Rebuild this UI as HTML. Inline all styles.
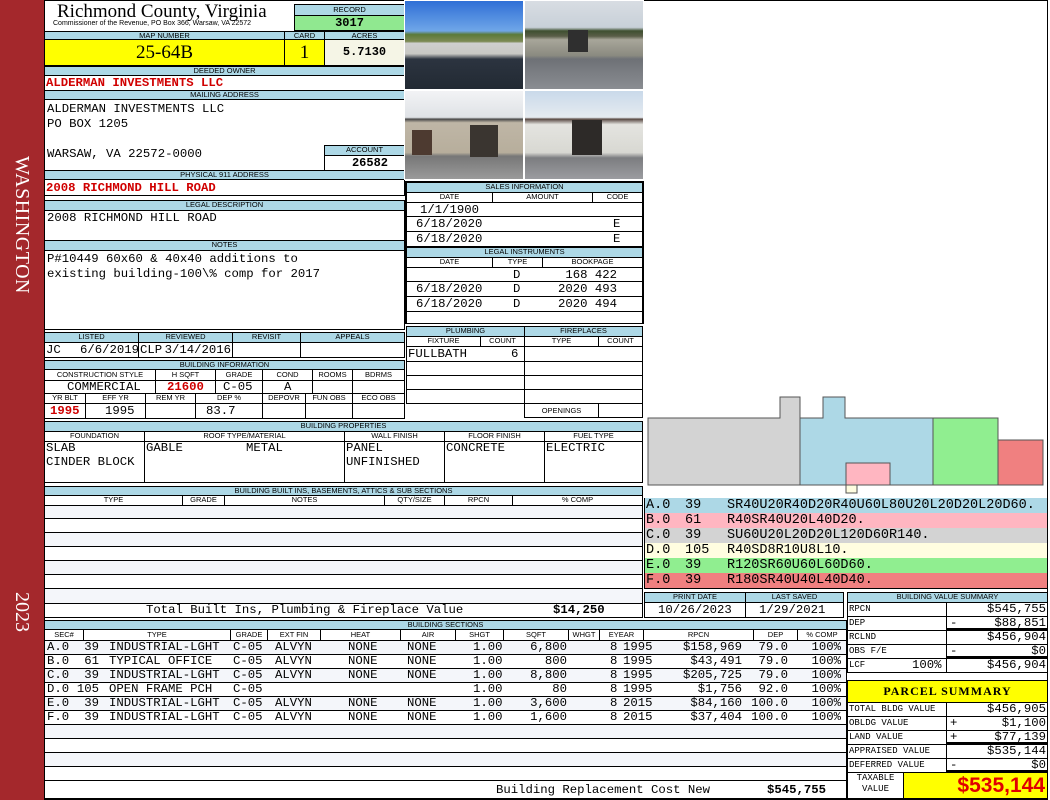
<!DOCTYPE html>
<html><head><meta charset="utf-8"><style>
*{margin:0;padding:0}
body{width:1050px;height:800px;position:relative;background:#fff;overflow:hidden;font-family:"Liberation Sans",sans-serif}
.a{position:absolute;box-sizing:border-box}
.h{position:absolute;box-sizing:border-box;background:#add8e6;border:1px solid #000;font:7.5px "Liberation Sans",sans-serif;text-align:center;line-height:8px;overflow:hidden;white-space:nowrap;color:#000}
.c{position:absolute;box-sizing:border-box;border:1px solid #000;background:#fff}
.t{position:absolute;font:12.3px "Liberation Mono",monospace;white-space:pre;line-height:13px;color:#000}
.R{text-align:right}
.r{color:#d00000;font-weight:bold}
.s{position:absolute;font:9px "Liberation Mono",monospace;white-space:pre;line-height:13px}
.L{position:absolute;font:13.5px "Liberation Mono",monospace;white-space:pre;line-height:15px}
</style></head><body>
<div class="a" style="left:0;top:0;width:44px;height:800px;background:#a4282c"></div>
<div class="a" style="left:8px;top:156px;width:28px;height:170px;color:#fff;font:20px 'Liberation Serif',serif;writing-mode:vertical-rl;line-height:28px;letter-spacing:0.5px">WASHINGTON</div>
<div class="a" style="left:8px;top:592px;width:28px;height:40px;color:#fff;font:20px 'Liberation Serif',serif;writing-mode:vertical-rl;line-height:28px">2023</div>
<div class="a" style="left:44px;top:0;width:1004px;height:800px;border:1px solid #000"></div>

<div class="a" style="left:57px;top:2px;font:19px 'Liberation Serif',serif;line-height:20px">Richmond County, Virginia</div>
<div class="a" style="left:53px;top:20px;font:7px 'Liberation Sans',sans-serif;line-height:8px;white-space:nowrap">Commissioner of the Revenue, PO Box 366, Warsaw, VA 22572</div>
<div class="h" style="left:294px;top:4px;width:111px;height:12px;line-height:10px">RECORD</div>
<div class="c" style="left:294px;top:15px;width:111px;height:16px;background:#90e890;font:bold 12px 'Liberation Mono',monospace;text-align:center;line-height:14px">3017</div>

<div class="h" style="left:44px;top:31px;width:241px;height:9px">MAP NUMBER</div>
<div class="h" style="left:284px;top:31px;width:41px;height:9px">CARD</div>
<div class="h" style="left:324px;top:31px;width:81px;height:9px">ACRES</div>
<div class="c" style="left:44px;top:39px;width:241px;height:27px;background:#ffff00;font:19px 'Liberation Serif',serif;text-align:center;line-height:25px">25-64B</div>
<div class="c" style="left:284px;top:39px;width:41px;height:27px;background:#ffff00;font:19px 'Liberation Serif',serif;text-align:center;line-height:25px">1</div>
<div class="c" style="left:324px;top:39px;width:81px;height:27px;background:#f5f5e6;font:bold 12px 'Liberation Mono',monospace;text-align:center;line-height:25px">5.7130</div>

<div class="h" style="left:44px;top:66px;width:361px;height:10px">DEEDED OWNER</div>
<div class="c" style="left:44px;top:75px;width:361px;height:16px"></div>
<div class="t r" style="left:46px;top:77px">ALDERMAN INVESTMENTS LLC</div>
<div class="h" style="left:44px;top:90px;width:361px;height:10px">MAILING ADDRESS</div>
<div class="c" style="left:44px;top:99px;width:361px;height:72px"></div>
<div class="t" style="left:47px;top:103px">ALDERMAN INVESTMENTS LLC</div>
<div class="t" style="left:47px;top:118px">PO BOX 1205</div>
<div class="t" style="left:47px;top:148px">WARSAW, VA 22572-0000</div>
<div class="h" style="left:324px;top:145px;width:81px;height:11px">ACCOUNT</div>
<div class="c" style="left:324px;top:155px;width:81px;height:16px;font:bold 12px 'Liberation Mono',monospace;text-align:right;padding-right:16px;line-height:14px">26582</div>
<div class="h" style="left:44px;top:170px;width:361px;height:10px">PHYSICAL 911 ADDRESS</div>
<div class="c" style="left:44px;top:179px;width:361px;height:17px"></div>
<div class="t r" style="left:46px;top:182px">2008 RICHMOND HILL ROAD</div>

<div class="h" style="left:44px;top:200px;width:361px;height:11px">LEGAL DESCRIPTION</div>
<div class="c" style="left:44px;top:210px;width:361px;height:31px"></div>
<div class="t" style="left:47px;top:212px">2008 RICHMOND HILL ROAD</div>
<div class="h" style="left:44px;top:240px;width:361px;height:11px">NOTES</div>
<div class="c" style="left:44px;top:250px;width:361px;height:80px"></div>
<div class="t" style="left:47px;top:253px">P#10449 60x60 &amp; 40x40 additions to</div>
<div class="t" style="left:47px;top:268px">existing building-100\% comp for 2017</div>

<div class="h" style="left:44px;top:332px;width:95px;height:11px">LISTED</div>
<div class="h" style="left:138px;top:332px;width:95px;height:11px">REVIEWED</div>
<div class="h" style="left:232px;top:332px;width:69px;height:11px">REVISIT</div>
<div class="h" style="left:300px;top:332px;width:105px;height:11px">APPEALS</div>
<div class="c" style="left:44px;top:342px;width:95px;height:16px"></div>
<div class="c" style="left:138px;top:342px;width:95px;height:16px"></div>
<div class="c" style="left:232px;top:342px;width:69px;height:16px"></div>
<div class="c" style="left:300px;top:342px;width:105px;height:16px"></div>
<div class="t" style="left:46px;top:344px">JC</div>
<div class="t R" style="left:80px;top:344px;width:58px">6/6/2019</div>
<div class="t" style="left:140px;top:344px">CLP</div>
<div class="t R" style="left:160px;top:344px;width:71px">3/14/2016</div>

<div class="h" style="left:44px;top:360px;width:361px;height:10px">BUILDING INFORMATION</div>
<div class="h" style="left:44px;top:369px;width:112px;height:12px;background:#fff;line-height:10px">CONSTRUCTION STYLE</div>
<div class="h" style="left:155px;top:369px;width:61px;height:12px;background:#fff;line-height:10px">H SQFT</div>
<div class="h" style="left:215px;top:369px;width:48px;height:12px;background:#fff;line-height:10px">GRADE</div>
<div class="h" style="left:262px;top:369px;width:51px;height:12px;background:#fff;line-height:10px">COND</div>
<div class="h" style="left:312px;top:369px;width:41px;height:12px;background:#fff;line-height:10px">ROOMS</div>
<div class="h" style="left:352px;top:369px;width:53px;height:12px;background:#fff;line-height:10px">BDRMS</div>
<div class="c" style="left:44px;top:380px;width:112px;height:14px"></div>
<div class="c" style="left:155px;top:380px;width:61px;height:14px"></div>
<div class="c" style="left:215px;top:380px;width:48px;height:14px"></div>
<div class="c" style="left:262px;top:380px;width:51px;height:14px"></div>
<div class="c" style="left:312px;top:380px;width:41px;height:14px"></div>
<div class="c" style="left:352px;top:380px;width:53px;height:14px"></div>
<div class="t" style="left:67px;top:381px">COMMERCIAL</div>
<div class="t r" style="left:167px;top:381px">21600</div>
<div class="t" style="left:223px;top:381px">C-05</div>
<div class="t" style="left:284px;top:381px">A</div>
<div class="h" style="left:44px;top:393px;width:42px;height:11px;background:#fff">YR BLT</div>
<div class="h" style="left:85px;top:393px;width:61px;height:11px;background:#fff">EFF YR</div>
<div class="h" style="left:145px;top:393px;width:51px;height:11px;background:#fff">REM YR</div>
<div class="h" style="left:195px;top:393px;width:68px;height:11px;background:#fff">DEP %</div>
<div class="h" style="left:262px;top:393px;width:44px;height:11px;background:#fff">DEPOVR</div>
<div class="h" style="left:305px;top:393px;width:48px;height:11px;background:#fff">FUN OBS</div>
<div class="h" style="left:352px;top:393px;width:53px;height:11px;background:#fff">ECO OBS</div>
<div class="c" style="left:44px;top:403px;width:42px;height:16px"></div>
<div class="c" style="left:85px;top:403px;width:61px;height:16px"></div>
<div class="c" style="left:145px;top:403px;width:51px;height:16px"></div>
<div class="c" style="left:195px;top:403px;width:68px;height:16px"></div>
<div class="c" style="left:262px;top:403px;width:44px;height:16px"></div>
<div class="c" style="left:305px;top:403px;width:48px;height:16px"></div>
<div class="c" style="left:352px;top:403px;width:53px;height:16px"></div>
<div class="t r" style="left:50px;top:405px">1995</div>
<div class="t" style="left:105px;top:405px">1995</div>
<div class="t" style="left:206px;top:405px">83.7</div>

<div class="a" style="left:404px;top:0;width:120px;height:90px;border:1px solid #fff;background:linear-gradient(#2f6fd6 0,#6fa6e8 34%,#5b7a3a 38%,#7d8a55 46%,#cfcfcf 48%,#c8c8c4 60%,#2c3440 66%,#222a33 100%)"></div>
<div class="a" style="left:524px;top:0;width:120px;height:90px;border:1px solid #fff;background:linear-gradient(#d8dde3 0,#c8d0d8 30%,#3f5030 34%,#5a5e48 40%,#a8a69a 44%,#8a8a80 62%,#6e7176 66%,#8a8d92 100%)"></div>
<div class="a" style="left:404px;top:90px;width:120px;height:90px;border:1px solid #fff;background:linear-gradient(#f2f3f5 0,#dfe2e6 30%,#4a4a4a 32%,#bfb6a6 36%,#b7ae9c 70%,#777 74%,#9a9a9a 100%)"></div>
<div class="a" style="left:524px;top:90px;width:120px;height:90px;border:1px solid #fff;background:linear-gradient(#c9d9ea 0,#e6ebf0 30%,#5a4a44 32%,#e4e4e0 38%,#d8d8d2 70%,#7c7d80 76%,#9b9ca0 100%)"></div>
<div class="a" style="left:412px;top:130px;width:20px;height:25px;background:#4d3a30"></div>
<div class="a" style="left:470px;top:125px;width:28px;height:32px;background:#3a3530"></div>
<div class="a" style="left:572px;top:120px;width:30px;height:35px;background:#2d2a28"></div>
<div class="a" style="left:568px;top:30px;width:20px;height:22px;background:#2f2f2f"></div>

<div class="c" style="left:405px;top:181px;width:239px;height:67px"></div>
<div class="h" style="left:406px;top:182px;width:237px;height:11px">SALES INFORMATION</div>
<div class="h" style="left:406px;top:192px;width:87px;height:11px;background:#fff">DATE</div>
<div class="h" style="left:492px;top:192px;width:101px;height:11px;background:#fff">AMOUNT</div>
<div class="h" style="left:592px;top:192px;width:51px;height:11px;background:#fff">CODE</div>
<div class="c" style="left:406px;top:202px;width:237px;height:15px"></div>
<div class="c" style="left:406px;top:216px;width:237px;height:16px"></div>
<div class="c" style="left:406px;top:231px;width:237px;height:16px"></div>
<div class="t" style="left:420px;top:204px">1/1/1900</div>
<div class="t" style="left:416px;top:218px">6/18/2020</div><div class="t" style="left:613px;top:218px">E</div>
<div class="t" style="left:416px;top:233px">6/18/2020</div><div class="t" style="left:613px;top:233px">E</div>

<div class="c" style="left:405px;top:246px;width:239px;height:78px"></div>
<div class="h" style="left:406px;top:247px;width:237px;height:11px">LEGAL INSTRUMENTS</div>
<div class="h" style="left:406px;top:257px;width:87px;height:11px;background:#fff">DATE</div>
<div class="h" style="left:492px;top:257px;width:51px;height:11px;background:#fff">TYPE</div>
<div class="h" style="left:542px;top:257px;width:101px;height:11px;background:#fff">BOOKPAGE</div>
<div class="c" style="left:406px;top:267px;width:237px;height:15px"></div>
<div class="c" style="left:406px;top:281px;width:237px;height:16px"></div>
<div class="c" style="left:406px;top:296px;width:237px;height:16px"></div>
<div class="c" style="left:406px;top:311px;width:237px;height:13px"></div>
<div class="t" style="left:513px;top:269px">D</div><div class="t R" style="left:540px;top:269px;width:77px">168 422</div>
<div class="t" style="left:416px;top:283px">6/18/2020</div><div class="t" style="left:513px;top:283px">D</div><div class="t R" style="left:540px;top:283px;width:77px">2020 493</div>
<div class="t" style="left:416px;top:298px">6/18/2020</div><div class="t" style="left:513px;top:298px">D</div><div class="t R" style="left:540px;top:298px;width:77px">2020 494</div>

<div class="h" style="left:406px;top:326px;width:119px;height:11px">PLUMBING</div>
<div class="h" style="left:524px;top:326px;width:119px;height:11px">FIREPLACES</div>
<div class="h" style="left:406px;top:336px;width:75px;height:11px;background:#fff">FIXTURE</div>
<div class="h" style="left:480px;top:336px;width:45px;height:11px;background:#fff">COUNT</div>
<div class="h" style="left:524px;top:336px;width:75px;height:11px;background:#fff">TYPE</div>
<div class="h" style="left:598px;top:336px;width:45px;height:11px;background:#fff">COUNT</div>
<div class="c" style="left:406px;top:346px;width:119px;height:16px"></div>
<div class="c" style="left:406px;top:361px;width:119px;height:15px"></div>
<div class="c" style="left:406px;top:375px;width:119px;height:15px"></div>
<div class="c" style="left:406px;top:389px;width:119px;height:15px"></div>
<div class="c" style="left:524px;top:346px;width:119px;height:16px"></div>
<div class="c" style="left:524px;top:361px;width:119px;height:15px"></div>
<div class="c" style="left:524px;top:375px;width:119px;height:15px"></div>
<div class="c" style="left:524px;top:389px;width:119px;height:15px"></div>
<div class="h" style="left:524px;top:403px;width:75px;height:15px;background:#fff;line-height:13px">OPENINGS</div>
<div class="c" style="left:598px;top:403px;width:45px;height:15px"></div>
<div class="t" style="left:408px;top:348px">FULLBATH</div><div class="t" style="left:511px;top:348px">6</div>

<div class="h" style="left:44px;top:421px;width:599px;height:11px">BUILDING PROPERTIES</div>
<div class="h" style="left:44px;top:431px;width:101px;height:11px;background:#fff">FOUNDATION</div>
<div class="h" style="left:144px;top:431px;width:201px;height:11px;background:#fff">ROOF TYPE/MATERIAL</div>
<div class="h" style="left:344px;top:431px;width:101px;height:11px;background:#fff">WALL FINISH</div>
<div class="h" style="left:444px;top:431px;width:101px;height:11px;background:#fff">FLOOR FINISH</div>
<div class="h" style="left:544px;top:431px;width:99px;height:11px;background:#fff">FUEL TYPE</div>
<div class="c" style="left:44px;top:441px;width:101px;height:42px"></div>
<div class="c" style="left:144px;top:441px;width:201px;height:42px"></div>
<div class="c" style="left:344px;top:441px;width:101px;height:42px"></div>
<div class="c" style="left:444px;top:441px;width:101px;height:42px"></div>
<div class="c" style="left:544px;top:441px;width:99px;height:42px"></div>
<div class="t" style="left:46px;top:442px">SLAB</div>
<div class="t" style="left:46px;top:456px">CINDER BLOCK</div>
<div class="t" style="left:146px;top:442px">GABLE</div>
<div class="t" style="left:246px;top:442px">METAL</div>
<div class="t" style="left:346px;top:442px">PANEL</div>
<div class="t" style="left:346px;top:456px">UNFINISHED</div>
<div class="t" style="left:446px;top:442px">CONCRETE</div>
<div class="t" style="left:546px;top:442px">ELECTRIC</div>

<div class="h" style="left:44px;top:486px;width:599px;height:10px">BUILDING BUILT INS, BASEMENTS, ATTICS &amp; SUB SECTIONS</div>
<div class="h" style="left:44px;top:495px;width:139px;height:11px;background:#fff">TYPE</div>
<div class="h" style="left:182px;top:495px;width:43px;height:11px;background:#fff">GRADE</div>
<div class="h" style="left:224px;top:495px;width:161px;height:11px;background:#fff">NOTES</div>
<div class="h" style="left:384px;top:495px;width:61px;height:11px;background:#fff">QTY/SIZE</div>
<div class="h" style="left:444px;top:495px;width:69px;height:11px;background:#fff">RPCN</div>
<div class="h" style="left:512px;top:495px;width:131px;height:11px;background:#fff">% COMP</div>
<div class="c" style="left:44px;top:505px;width:599px;height:14px;background:#f4f6fa"></div>
<div class="c" style="left:44px;top:518px;width:599px;height:15px"></div>
<div class="c" style="left:44px;top:532px;width:599px;height:15px;background:#f4f6fa"></div>
<div class="c" style="left:44px;top:546px;width:599px;height:15px"></div>
<div class="c" style="left:44px;top:560px;width:599px;height:15px;background:#f4f6fa"></div>
<div class="c" style="left:44px;top:574px;width:599px;height:15px"></div>
<div class="c" style="left:44px;top:588px;width:599px;height:16px;background:#f4f6fa"></div>
<div class="c" style="left:44px;top:603px;width:599px;height:15px"></div>
<div class="t" style="left:146px;top:604px">Total Built Ins, Plumbing &amp; Fireplace Value</div>
<div class="t" style="left:553px;top:604px;font-weight:bold">$14,250</div>

<div class="h" style="left:44px;top:620px;width:803px;height:10px">BUILDING SECTIONS</div>
<div class="h" style="left:44px;top:629px;width:40px;height:12px;background:#fff;line-height:10px">SEC#</div>
<div class="h" style="left:83px;top:629px;width:148px;height:12px;background:#fff;line-height:10px">TYPE</div>
<div class="h" style="left:230px;top:629px;width:38px;height:12px;background:#fff;line-height:10px">GRADE</div>
<div class="h" style="left:267px;top:629px;width:54px;height:12px;background:#fff;line-height:10px">EXT FIN</div>
<div class="h" style="left:320px;top:629px;width:81px;height:12px;background:#fff;line-height:10px">HEAT</div>
<div class="h" style="left:400px;top:629px;width:56px;height:12px;background:#fff;line-height:10px">AIR</div>
<div class="h" style="left:455px;top:629px;width:49px;height:12px;background:#fff;line-height:10px">SHGT</div>
<div class="h" style="left:503px;top:629px;width:66px;height:12px;background:#fff;line-height:10px">SQFT</div>
<div class="h" style="left:568px;top:629px;width:32px;height:12px;background:#fff;line-height:10px">WHGT</div>
<div class="h" style="left:599px;top:629px;width:45px;height:12px;background:#fff;line-height:10px">EYEAR</div>
<div class="h" style="left:643px;top:629px;width:111px;height:12px;background:#fff;line-height:10px">RPCN</div>
<div class="h" style="left:753px;top:629px;width:45px;height:12px;background:#fff;line-height:10px">DEP</div>
<div class="h" style="left:797px;top:629px;width:50px;height:12px;background:#fff;line-height:10px">% COMP</div>
<div class="c" style="left:44px;top:640px;width:803px;height:15px;background:#f4f6fa"></div>
<div class="c" style="left:44px;top:654px;width:803px;height:15px"></div>
<div class="c" style="left:44px;top:668px;width:803px;height:15px;background:#f4f6fa"></div>
<div class="c" style="left:44px;top:682px;width:803px;height:15px"></div>
<div class="c" style="left:44px;top:696px;width:803px;height:15px;background:#f4f6fa"></div>
<div class="c" style="left:44px;top:710px;width:803px;height:15px"></div>
<div class="c" style="left:44px;top:724px;width:803px;height:15px;background:#f4f6fa"></div>
<div class="c" style="left:44px;top:738px;width:803px;height:15px"></div>
<div class="c" style="left:44px;top:752px;width:803px;height:15px;background:#f4f6fa"></div>
<div class="c" style="left:44px;top:766px;width:803px;height:15px"></div>
<div class="c" style="left:44px;top:780px;width:803px;height:19px"></div>

<div class="t" style="left:47px;top:641px">A.0</div><div class="t R" style="left:70px;top:641px;width:29px">39</div><div class="t" style="left:109px;top:641px">INDUSTRIAL-LGHT</div><div class="t" style="left:233px;top:641px">C-05</div><div class="t" style="left:275px;top:641px">ALVYN</div><div class="t" style="left:348px;top:641px">NONE</div><div class="t" style="left:407px;top:641px">NONE</div><div class="t" style="left:473px;top:641px">1.00</div><div class="t R" style="left:500px;top:641px;width:67px">6,800</div><div class="t" style="left:610px;top:641px">8</div><div class="t" style="left:623px;top:641px">1995</div><div class="t R" style="left:650px;top:641px;width:92px">$158,969</div><div class="t R" style="left:740px;top:641px;width:48px">79.0</div><div class="t R" style="left:800px;top:641px;width:41px">100%</div>

<div class="t" style="left:47px;top:655px">B.0</div><div class="t R" style="left:70px;top:655px;width:29px">61</div><div class="t" style="left:109px;top:655px">TYPICAL OFFICE</div><div class="t" style="left:233px;top:655px">C-05</div><div class="t" style="left:275px;top:655px">ALVYN</div><div class="t" style="left:348px;top:655px">NONE</div><div class="t" style="left:407px;top:655px">NONE</div><div class="t" style="left:473px;top:655px">1.00</div><div class="t R" style="left:500px;top:655px;width:67px">800</div><div class="t" style="left:610px;top:655px">8</div><div class="t" style="left:623px;top:655px">1995</div><div class="t R" style="left:650px;top:655px;width:92px">$43,491</div><div class="t R" style="left:740px;top:655px;width:48px">79.0</div><div class="t R" style="left:800px;top:655px;width:41px">100%</div>

<div class="t" style="left:47px;top:669px">C.0</div><div class="t R" style="left:70px;top:669px;width:29px">39</div><div class="t" style="left:109px;top:669px">INDUSTRIAL-LGHT</div><div class="t" style="left:233px;top:669px">C-05</div><div class="t" style="left:275px;top:669px">ALVYN</div><div class="t" style="left:348px;top:669px">NONE</div><div class="t" style="left:407px;top:669px">NONE</div><div class="t" style="left:473px;top:669px">1.00</div><div class="t R" style="left:500px;top:669px;width:67px">8,800</div><div class="t" style="left:610px;top:669px">8</div><div class="t" style="left:623px;top:669px">1995</div><div class="t R" style="left:650px;top:669px;width:92px">$205,725</div><div class="t R" style="left:740px;top:669px;width:48px">79.0</div><div class="t R" style="left:800px;top:669px;width:41px">100%</div>

<div class="t" style="left:47px;top:683px">D.0</div><div class="t R" style="left:70px;top:683px;width:29px">105</div><div class="t" style="left:109px;top:683px">OPEN FRAME PCH</div><div class="t" style="left:233px;top:683px">C-05</div><div class="t" style="left:473px;top:683px">1.00</div><div class="t R" style="left:500px;top:683px;width:67px">80</div><div class="t" style="left:610px;top:683px">8</div><div class="t" style="left:623px;top:683px">1995</div><div class="t R" style="left:650px;top:683px;width:92px">$1,756</div><div class="t R" style="left:740px;top:683px;width:48px">92.0</div><div class="t R" style="left:800px;top:683px;width:41px">100%</div>

<div class="t" style="left:47px;top:697px">E.0</div><div class="t R" style="left:70px;top:697px;width:29px">39</div><div class="t" style="left:109px;top:697px">INDUSTRIAL-LGHT</div><div class="t" style="left:233px;top:697px">C-05</div><div class="t" style="left:275px;top:697px">ALVYN</div><div class="t" style="left:348px;top:697px">NONE</div><div class="t" style="left:407px;top:697px">NONE</div><div class="t" style="left:473px;top:697px">1.00</div><div class="t R" style="left:500px;top:697px;width:67px">3,600</div><div class="t" style="left:610px;top:697px">8</div><div class="t" style="left:623px;top:697px">2015</div><div class="t R" style="left:650px;top:697px;width:92px">$84,160</div><div class="t R" style="left:740px;top:697px;width:48px">100.0</div><div class="t R" style="left:800px;top:697px;width:41px">100%</div>

<div class="t" style="left:47px;top:711px">F.0</div><div class="t R" style="left:70px;top:711px;width:29px">39</div><div class="t" style="left:109px;top:711px">INDUSTRIAL-LGHT</div><div class="t" style="left:233px;top:711px">C-05</div><div class="t" style="left:275px;top:711px">ALVYN</div><div class="t" style="left:348px;top:711px">NONE</div><div class="t" style="left:407px;top:711px">NONE</div><div class="t" style="left:473px;top:711px">1.00</div><div class="t R" style="left:500px;top:711px;width:67px">1,600</div><div class="t" style="left:610px;top:711px">8</div><div class="t" style="left:623px;top:711px">2015</div><div class="t R" style="left:650px;top:711px;width:92px">$37,404</div><div class="t R" style="left:740px;top:711px;width:48px">100.0</div><div class="t R" style="left:800px;top:711px;width:41px">100%</div>

<div class="t" style="left:496px;top:784px">Building Replacement Cost New</div>
<div class="t" style="left:767px;top:784px;font-weight:bold">$545,755</div>

<svg class="a" style="left:644px;top:0" width="404" height="498">
<g stroke="#555" stroke-width="1">
<polygon points="4,418 136,418 136,397 156,397 156,485 4,485" fill="#d3d3d3"/>
<polygon points="156,418 179,418 179,397 201,397 201,418 289,418 289,485 156,485" fill="#add8e6"/>
<rect x="202" y="463" width="44" height="22" fill="#ffb6c1"/>
<rect x="202" y="485" width="11" height="8" fill="#fffde0"/>
<rect x="289" y="418" width="65" height="67" fill="#90ee90"/>
<rect x="354" y="440" width="45" height="45" fill="#f08080"/>
</g>
</svg>
<div class="a" style="left:644px;top:498px;width:404px;height:91px;border:1px solid #000"></div>
<div class="a" style="left:645px;top:498px;width:402px;height:15px;background:#add8e6"></div>
<div class="a" style="left:645px;top:513px;width:402px;height:15px;background:#ffb6c1"></div>
<div class="a" style="left:645px;top:528px;width:402px;height:15px;background:#d3d3d3"></div>
<div class="a" style="left:645px;top:543px;width:402px;height:15px;background:#fffde0"></div>
<div class="a" style="left:645px;top:558px;width:402px;height:15px;background:#90ee90"></div>
<div class="a" style="left:645px;top:573px;width:402px;height:15px;background:#f08080"></div>
<div class="L" style="left:646px;top:498px">A.0</div><div class="L" style="left:685px;top:498px">39</div><div class="L" style="left:727px;top:498px">SR40U20R40D20R40U60L80U20L20D20L20D60.</div>
<div class="L" style="left:646px;top:513px">B.0</div><div class="L" style="left:685px;top:513px">61</div><div class="L" style="left:727px;top:513px">R40SR40U20L40D20.</div>
<div class="L" style="left:646px;top:528px">C.0</div><div class="L" style="left:685px;top:528px">39</div><div class="L" style="left:727px;top:528px">SU60U20L20D20L120D60R140.</div>
<div class="L" style="left:646px;top:543px">D.0</div><div class="L" style="left:685px;top:543px">105</div><div class="L" style="left:727px;top:543px">R40SD8R10U8L10.</div>
<div class="L" style="left:646px;top:558px">E.0</div><div class="L" style="left:685px;top:558px">39</div><div class="L" style="left:727px;top:558px">R120SR60U60L60D60.</div>
<div class="L" style="left:646px;top:573px">F.0</div><div class="L" style="left:685px;top:573px">39</div><div class="L" style="left:727px;top:573px">R180SR40U40L40D40.</div>

<div class="h" style="left:644px;top:592px;width:102px;height:11px">PRINT DATE</div>
<div class="h" style="left:745px;top:592px;width:99px;height:11px">LAST SAVED</div>
<div class="c" style="left:644px;top:602px;width:102px;height:16px"></div>
<div class="c" style="left:745px;top:602px;width:99px;height:16px"></div>
<div class="t" style="left:658px;top:604px">10/26/2023</div>
<div class="t" style="left:759px;top:604px">1/29/2021</div>

<div class="h" style="left:847px;top:592px;width:201px;height:11px">BUILDING VALUE SUMMARY</div>
<div class="c" style="left:847px;top:602px;width:100px;height:15px"></div><div class="c" style="left:946px;top:602px;width:102px;height:15px"></div>
<div class="c" style="left:847px;top:616px;width:100px;height:15px"></div><div class="c" style="left:946px;top:616px;width:102px;height:15px;border-bottom:3px solid #000"></div>
<div class="c" style="left:847px;top:630px;width:100px;height:15px"></div><div class="c" style="left:946px;top:630px;width:102px;height:15px"></div>
<div class="c" style="left:847px;top:644px;width:100px;height:15px"></div><div class="c" style="left:946px;top:644px;width:102px;height:15px;border-bottom:3px solid #000"></div>
<div class="c" style="left:847px;top:658px;width:100px;height:15px"></div><div class="c" style="left:946px;top:658px;width:102px;height:15px"></div>
<div class="s" style="left:849px;top:603px">RPCN</div>
<div class="s" style="left:849px;top:617px">DEP</div>
<div class="s" style="left:849px;top:631px">RCLND</div>
<div class="s" style="left:849px;top:645px">OBS F/E</div>
<div class="s" style="left:849px;top:659px">LCF</div>
<div class="t" style="left:912px;top:659px">100%</div>
<div class="t" style="left:950px;top:617px">-</div>
<div class="t" style="left:950px;top:645px">-</div>
<div class="t R" style="left:946px;top:603px;width:100px">$545,755</div>
<div class="t R" style="left:946px;top:617px;width:100px">$88,851</div>
<div class="t R" style="left:946px;top:631px;width:100px">$456,904</div>
<div class="t R" style="left:946px;top:645px;width:100px">$0</div>
<div class="t R" style="left:946px;top:659px;width:100px">$456,904</div>

<div class="c" style="left:847px;top:680px;width:201px;height:23px;background:#ffff00;font:bold 12px 'Liberation Serif',serif;text-align:center;line-height:21px;letter-spacing:1px">PARCEL SUMMARY</div>
<div class="c" style="left:847px;top:702px;width:100px;height:15px"></div><div class="c" style="left:946px;top:702px;width:102px;height:15px"></div>
<div class="c" style="left:847px;top:716px;width:100px;height:15px"></div><div class="c" style="left:946px;top:716px;width:102px;height:15px"></div>
<div class="c" style="left:847px;top:730px;width:100px;height:15px"></div><div class="c" style="left:946px;top:730px;width:102px;height:15px;border-bottom:3px solid #000"></div>
<div class="c" style="left:847px;top:744px;width:100px;height:15px"></div><div class="c" style="left:946px;top:744px;width:102px;height:15px"></div>
<div class="c" style="left:847px;top:758px;width:100px;height:15px"></div><div class="c" style="left:946px;top:758px;width:102px;height:15px;border-bottom:3px solid #000"></div>
<div class="s" style="left:849px;top:703px">TOTAL BLDG VALUE</div>
<div class="s" style="left:849px;top:717px">OBLDG VALUE</div>
<div class="s" style="left:849px;top:731px">LAND VALUE</div>
<div class="s" style="left:849px;top:745px">APPRAISED VALUE</div>
<div class="s" style="left:849px;top:759px">DEFERRED VALUE</div>
<div class="t" style="left:950px;top:717px">+</div>
<div class="t" style="left:950px;top:731px">+</div>
<div class="t" style="left:950px;top:759px">-</div>
<div class="t R" style="left:946px;top:703px;width:100px">$456,905</div>
<div class="t R" style="left:946px;top:717px;width:100px">$1,100</div>
<div class="t R" style="left:946px;top:731px;width:100px">$77,139</div>
<div class="t R" style="left:946px;top:745px;width:100px">$535,144</div>
<div class="t R" style="left:946px;top:759px;width:100px">$0</div>
<div class="c" style="left:847px;top:772px;width:57px;height:27px"></div>
<div class="s" style="left:847px;top:773px;width:57px;text-align:center;line-height:11px">TAXABLE<br>VALUE</div>
<div class="c" style="left:903px;top:772px;width:145px;height:27px;background:#ffff00;color:#e00000;font:bold 21px 'Liberation Sans',sans-serif;text-align:right;padding-right:2px;line-height:25px">$535,144</div>
</body></html>
